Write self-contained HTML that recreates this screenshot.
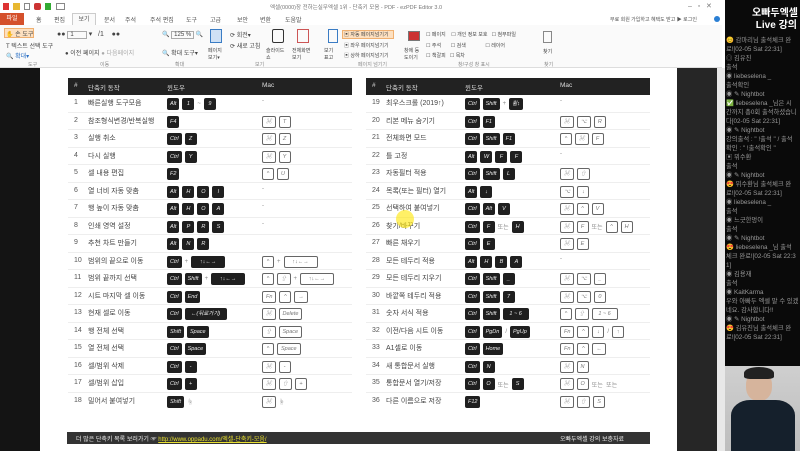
<!DOCTYPE html>
<html><head><meta charset="utf-8">
<style>
*{margin:0;padding:0;box-sizing:border-box}
body{width:800px;height:451px;overflow:hidden;position:relative;background:#fff;font-family:"Liberation Sans","Noto Sans CJK KR",sans-serif;font-size:7px;color:#333}
.a{position:absolute;white-space:nowrap}
.tab{position:absolute;top:15px;font-size:6px;color:#555}
.rb{position:absolute;top:25px;height:43px;background:#fafafa;border-bottom:1px solid #ddd}
.gl{position:absolute;top:61px;font-size:5px;color:#888}
.it{position:absolute;font-size:6px;color:#444;white-space:nowrap}
.tbl{position:absolute;top:78px;width:284px}
.hd{position:absolute;left:0;top:0;width:284px;height:17px;background:#222;color:#ddd;font-size:6.5px}
.hd span{position:absolute;top:4px}
.r{position:absolute;left:0;width:284px;height:17.5px;border-bottom:1px solid #eee}
.r .n{position:absolute;left:6px;top:4px;color:#555;font-size:7px}
.r .t{position:absolute;left:20px;top:3px;color:#444;font-size:7px}
.r .w{position:absolute;left:99px;top:3px;display:flex;gap:3px;align-items:center}
.r .m{position:absolute;left:194px;top:3px;display:flex;gap:3px;align-items:center}
.k{display:inline-block;height:12px;min-width:12px;padding:0 3px;background:#1f1f1f;color:#eee;font-size:5.5px;line-height:12px;border-radius:2px;text-align:center}
.c{display:inline-block;height:12px;min-width:12px;padding:0 3px;background:#fff;border:1px solid #666;color:#777;font-size:5.5px;line-height:10px;border-radius:2px;text-align:center}
.s{color:#888;font-size:6px}
.chat{position:absolute;left:726px;font-size:6.3px;color:#ddd;line-height:9px;white-space:nowrap}
</style></head><body>
<div class="a" style="left:0;top:0;width:800px;height:13px;background:#fff"></div>
<div class="a" style="left:3px;top:3px;width:6px;height:7px;background:#d33"></div>
<div class="a" style="left:13px;top:3px;width:7px;height:7px;background:#e8b830"></div>
<div class="a" style="left:24px;top:3px;width:6px;height:7px;border:1px solid #888"></div>
<div class="a" style="left:34px;top:3px;width:7px;height:7px;background:#c33;border-radius:2px"></div>
<div class="a" style="left:45px;top:3px;width:6px;height:7px;background:#3a3"></div>
<div class="a" style="left:56px;top:3px;width:9px;height:7px;border:1px solid #888"></div>
<div class="a" style="left:270px;top:3px;font-size:5.5px;color:#777">엑셀(0000)장 전하는실무엑셀 1위 - 단축키 모음 - PDF - ezPDF Editor 3.0</div>
<div class="a" style="left:688px;top:2px;font-size:7px;color:#777">–&nbsp;&nbsp;&nbsp;▫&nbsp;&nbsp;&nbsp;✕</div>
<div class="a" style="left:0;top:13px;width:24px;height:12px;background:#d4502b;color:#fff;font-size:6px;text-align:center;line-height:12px">파일</div>
<div class="tab" style="left:36px">홈</div><div class="tab" style="left:54px">편집</div>
<div class="a" style="left:72px;top:13px;width:24px;height:13px;border:1px solid #ccc;border-bottom:none;background:#fafafa;font-size:6px;color:#555;text-align:center;line-height:12px">보기</div>
<div class="tab" style="left:104px">문서</div><div class="tab" style="left:125px">주석</div><div class="tab" style="left:150px">주석 편집</div><div class="tab" style="left:186px">도구</div><div class="tab" style="left:210px">고급</div><div class="tab" style="left:237px">보안</div><div class="tab" style="left:260px">변환</div><div class="tab" style="left:285px">도움말</div>
<div class="a" style="left:610px;top:16px;font-size:5px;color:#555">무료 회원 가입하고 혜택도 받고 ▶ 로그인</div>
<div class="a" style="left:714px;top:16px;width:6px;height:6px;border-radius:50%;background:#2a7fd4"></div>
<div class="rb" style="left:0;width:722px"></div>
<div class="a" style="left:4px;top:28px;width:30px;height:10px;background:#fde0c0;border:1px solid #f0b070"></div>
<div class="it" style="left:6px;top:29px">✋ 손 도구</div>
<div class="it" style="left:6px;top:41px">T 텍스트 선택 도구</div>
<div class="it" style="left:6px;top:51px;color:#2a6fc4">🔍 확대▾</div>
<div class="gl" style="left:28px">도구</div>
<div class="a" style="left:57px;top:30px;width:100px;height:30px;font-size:7px;color:#444">●● <span style="border:1px solid #aaa;padding:0 12px 0 2px;font-size:6px">1</span> ▾&nbsp;&nbsp; /1&nbsp;&nbsp;&nbsp; ●●</div>
<div class="it" style="left:65px;top:48px">● 이전 페이지 <span style="color:#aaa">● 다음페이지</span></div>
<div class="gl" style="left:100px">이동</div>
<div class="it" style="left:162px;top:31px">🔍 <span style="border:1px solid #aaa;padding:0 2px">125 %</span> 🔍</div>
<div class="it" style="left:162px;top:48px">🔍 확대 도구▾</div>
<div class="gl" style="left:175px">확대</div>
<div class="a" style="left:210px;top:29px;width:12px;height:14px;border:1px solid #3a7cc4;background:#cfe1f5"></div>
<div class="it" style="left:208px;top:47px;font-size:5px">페이지<br>보기▾</div>
<div class="it" style="left:230px;top:30px">⟳ 회전▾</div>
<div class="it" style="left:230px;top:41px">⟳ 새로 고침</div>
<div class="a" style="left:272px;top:29px;width:12px;height:14px;border:1px solid #333;border-radius:2px"></div>
<div class="it" style="left:266px;top:47px;font-size:5px">슬라이드<br>쇼</div>
<div class="a" style="left:297px;top:29px;width:12px;height:14px;border:1px solid #c55"></div>
<div class="it" style="left:292px;top:47px;font-size:5px">전체화면<br>보기</div>
<div class="a" style="left:328px;top:29px;width:10px;height:14px;border:1px solid #3a7cc4"></div>
<div class="it" style="left:324px;top:47px;font-size:5px">보기<br>표고</div>
<div class="gl" style="left:255px">보기</div>
<div class="a" style="left:342px;top:30px;width:52px;height:9px;background:#fde0c0;border:1px solid #f0b070"></div>
<div class="it" style="left:344px;top:31px;font-size:5px">▣ 자동 페이지넘기기</div>
<div class="it" style="left:344px;top:42px;font-size:5px">▣ 좌우 페이지넘기기</div>
<div class="it" style="left:344px;top:52px;font-size:5px">▣ 상하 페이지넘기기</div>
<div class="gl" style="left:358px">페이지 넘기기</div>
<div class="a" style="left:408px;top:31px;width:12px;height:10px;background:#c33;border:1px solid #777"></div>
<div class="it" style="left:404px;top:47px;font-size:5px">창에 등<br>도이기</div>
<div class="it" style="left:426px;top:31px;font-size:5px">☐ 페이지&nbsp;&nbsp;&nbsp; ☐ 개인 정보 보호&nbsp;&nbsp; ☐ 첨부파일</div>
<div class="it" style="left:426px;top:42px;font-size:5px">☐ 주석&nbsp;&nbsp;&nbsp;&nbsp;&nbsp;&nbsp; ☐ 검색&nbsp;&nbsp;&nbsp;&nbsp;&nbsp;&nbsp;&nbsp;&nbsp;&nbsp;&nbsp;&nbsp;&nbsp;&nbsp; ☐ 레이어</div>
<div class="it" style="left:426px;top:52px;font-size:5px">☐ 책갈피&nbsp;&nbsp; ☐ 목차</div>
<div class="gl" style="left:458px">창/구성 창 표시</div>
<div class="a" style="left:543px;top:31px;width:9px;height:12px;border:1px solid #888"></div>
<div class="it" style="left:543px;top:48px;font-size:5px">찾기</div>
<div class="gl" style="left:544px">찾기</div>
<div class="a" style="left:0;top:68px;width:40px;height:383px;background:#141414"></div>
<div class="a" style="left:677px;top:68px;width:40px;height:383px;background:#262626"></div>
<div class="a" style="left:717px;top:68px;width:8px;height:383px;background:#e8e8e8"></div>
<div class="tbl" style="left:68px">
<div class="hd"><span style="left:6px">#</span><span style="left:20px">단축키 동작</span><span style="left:99px">윈도우</span><span style="left:194px">Mac</span></div>
<div class="r" style="top:17px"><span class="n">1</span><span class="t">빠른실행 도구모음</span><span class="w"><i class="k">Alt</i><i class="k">1</i><span class="s">~</span><i class="k">9</i></span><span class="m"><span class="s">-</span></span></div>
<div class="r" style="top:34.5px"><span class="n">2</span><span class="t">참조형식변경/반복실행</span><span class="w"><i class="k">F4</i></span><span class="m"><i class="c">⌘</i><i class="c">T</i></span></div>
<div class="r" style="top:52px"><span class="n">3</span><span class="t">실행 취소</span><span class="w"><i class="k">Ctrl</i><i class="k">Z</i></span><span class="m"><i class="c">⌘</i><i class="c">Z</i></span></div>
<div class="r" style="top:69.5px"><span class="n">4</span><span class="t">다시 실행</span><span class="w"><i class="k">Ctrl</i><i class="k">Y</i></span><span class="m"><i class="c">⌘</i><i class="c">Y</i></span></div>
<div class="r" style="top:87px"><span class="n">5</span><span class="t">셀 내용 편집</span><span class="w"><i class="k">F2</i></span><span class="m"><i class="c">^</i><i class="c">U</i></span></div>
<div class="r" style="top:104.5px"><span class="n">6</span><span class="t">열 너비 자동 맞춤</span><span class="w"><i class="k">Alt</i><i class="k">H</i><i class="k">O</i><i class="k">I</i></span><span class="m"><span class="s">-</span></span></div>
<div class="r" style="top:122px"><span class="n">7</span><span class="t">행 높이 자동 맞춤</span><span class="w"><i class="k">Alt</i><i class="k">H</i><i class="k">O</i><i class="k">A</i></span><span class="m"><span class="s">-</span></span></div>
<div class="r" style="top:139.5px"><span class="n">8</span><span class="t">인쇄 영역 설정</span><span class="w"><i class="k">Alt</i><i class="k">P</i><i class="k">R</i><i class="k">S</i></span><span class="m"><span class="s">-</span></span></div>
<div class="r" style="top:157px"><span class="n">9</span><span class="t">추천 차트 만들기</span><span class="w"><i class="k">Alt</i><i class="k">N</i><i class="k">R</i></span><span class="m"></span></div>
<div class="r" style="top:174.5px"><span class="n">10</span><span class="t">범위의 끝으로 이동</span><span class="w"><i class="k">Ctrl</i><span class="s">+</span><i class="k" style="width:34px">↑↓←→</i></span><span class="m"><i class="c">^</i><span class="s">+</span><i class="c" style="width:34px">↑↓←→</i></span></div>
<div class="r" style="top:192px"><span class="n">11</span><span class="t">범위 끝까지 선택</span><span class="w"><i class="k">Ctrl</i><i class="k">Shift</i><span class="s">+</span><i class="k" style="width:34px">↑↓←→</i></span><span class="m"><i class="c">^</i><i class="c">⇧</i><span class="s">+</span><i class="c" style="width:34px">↑↓←→</i></span></div>
<div class="r" style="top:209.5px"><span class="n">12</span><span class="t">시트 마지막 셀 이동</span><span class="w"><i class="k">Ctrl</i><i class="k">End</i></span><span class="m"><i class="c">Fn</i><i class="c">^</i><i class="c">→</i></span></div>
<div class="r" style="top:227px"><span class="n">13</span><span class="t">현재 셀로 이동</span><span class="w"><i class="k">Ctrl</i><i class="k" style="width:42px">←(뒤로가기)</i></span><span class="m"><i class="c">⌘</i><i class="c">Delete</i></span></div>
<div class="r" style="top:244.5px"><span class="n">14</span><span class="t">행 전체 선택</span><span class="w"><i class="k">Shift</i><i class="k">Space</i></span><span class="m"><i class="c">⇧</i><i class="c">Space</i></span></div>
<div class="r" style="top:262px"><span class="n">15</span><span class="t">열 전체 선택</span><span class="w"><i class="k">Ctrl</i><i class="k">Space</i></span><span class="m"><i class="c">^</i><i class="c">Space</i></span></div>
<div class="r" style="top:279.5px"><span class="n">16</span><span class="t">셀/범위 삭제</span><span class="w"><i class="k">Ctrl</i><i class="k">-</i></span><span class="m"><i class="c">⌘</i><i class="c">-</i></span></div>
<div class="r" style="top:297px"><span class="n">17</span><span class="t">셀/범위 삽입</span><span class="w"><i class="k">Ctrl</i><i class="k">+</i></span><span class="m"><i class="c">⌘</i><i class="c">⇧</i><i class="c">+</i></span></div>
<div class="r" style="top:314.5px;border:none"><span class="n">18</span><span class="t">밀어서 붙여넣기</span><span class="w"><i class="k">Shift</i><span class="s">☝</span></span><span class="m"><i class="c">⌘</i><span class="s">☝</span></span></div>
</div>
<div class="tbl" style="left:366px">
<div class="hd"><span style="left:6px">#</span><span style="left:20px">단축키 동작</span><span style="left:99px">윈도우</span><span style="left:194px">Mac</span></div>
<div class="r" style="top:17px"><span class="n">19</span><span class="t">최우스크롤 (2019↑)</span><span class="w"><i class="k">Ctrl</i><i class="k">Shift</i><span class="s">+</span><i class="k">휠↕</i></span><span class="m"><span class="s">-</span></span></div>
<div class="r" style="top:34.5px"><span class="n">20</span><span class="t">리본 메뉴 숨기기</span><span class="w"><i class="k">Ctrl</i><i class="k">F1</i></span><span class="m"><i class="c">⌘</i><i class="c">⌥</i><i class="c">R</i></span></div>
<div class="r" style="top:52px"><span class="n">21</span><span class="t">전체화면 모드</span><span class="w"><i class="k">Ctrl</i><i class="k">Shift</i><i class="k">F1</i></span><span class="m"><i class="c">^</i><i class="c">⌘</i><i class="c">F</i></span></div>
<div class="r" style="top:69.5px"><span class="n">22</span><span class="t">틀 고정</span><span class="w"><i class="k">Alt</i><i class="k">W</i><i class="k">F</i><i class="k">F</i></span><span class="m"><span class="s">-</span></span></div>
<div class="r" style="top:87px"><span class="n">23</span><span class="t">자동필터 적용</span><span class="w"><i class="k">Ctrl</i><i class="k">Shift</i><i class="k">L</i></span><span class="m"><i class="c">⌘</i><i class="c">⇧</i></span></div>
<div class="r" style="top:104.5px"><span class="n">24</span><span class="t">목록(또는 필터) 열기</span><span class="w"><i class="k">Alt</i><i class="k">↓</i></span><span class="m"><i class="c">⌥</i><i class="c">↓</i></span></div>
<div class="r" style="top:122px"><span class="n">25</span><span class="t">선택하여 붙여넣기</span><span class="w"><i class="k">Ctrl</i><i class="k">Alt</i><i class="k">V</i></span><span class="m"><i class="c">⌘</i><i class="c">^</i><i class="c">V</i></span></div>
<div class="r" style="top:139.5px"><span class="n">26</span><span class="t">찾기/바꾸기</span><span class="w"><i class="k">Ctrl</i><i class="k">F</i><span class="s">또는</span><i class="k">H</i></span><span class="m"><i class="c">⌘</i><i class="c">F</i><span class="s">또는</span><i class="c">^</i><i class="c">H</i></span></div>
<div class="r" style="top:157px"><span class="n">27</span><span class="t">빠른 채우기</span><span class="w"><i class="k">Ctrl</i><i class="k">E</i></span><span class="m"><i class="c">⌘</i><i class="c">E</i></span></div>
<div class="r" style="top:174.5px"><span class="n">28</span><span class="t">모든 테두리 적용</span><span class="w"><i class="k">Alt</i><i class="k">H</i><i class="k">B</i><i class="k">A</i></span><span class="m"><span class="s">-</span></span></div>
<div class="r" style="top:192px"><span class="n">29</span><span class="t">모든 테두리 지우기</span><span class="w"><i class="k">Ctrl</i><i class="k">Shift</i><i class="k">_</i></span><span class="m"><i class="c">⌘</i><i class="c">⌥</i><i class="c">_</i></span></div>
<div class="r" style="top:209.5px"><span class="n">30</span><span class="t">바깥쪽 테두리 적용</span><span class="w"><i class="k">Ctrl</i><i class="k">Shift</i><i class="k">7</i></span><span class="m"><i class="c">⌘</i><i class="c">⌥</i><i class="c">0</i></span></div>
<div class="r" style="top:227px"><span class="n">31</span><span class="t">숫자 서식 적용</span><span class="w"><i class="k">Ctrl</i><i class="k">Shift</i><i class="k" style="width:26px">1 ~ 6</i></span><span class="m"><i class="c">^</i><i class="c">⇧</i><i class="c" style="width:26px">1 ~ 6</i></span></div>
<div class="r" style="top:244.5px"><span class="n">32</span><span class="t">이전/다음 시트 이동</span><span class="w"><i class="k">Ctrl</i><i class="k">PgDn</i><span class="s">/</span><i class="k">PgUp</i></span><span class="m"><i class="c">Fn</i><i class="c">^</i><i class="c">↓</i><span class="s">/</span><i class="c">↑</i></span></div>
<div class="r" style="top:262px"><span class="n">33</span><span class="t">A1셀로 이동</span><span class="w"><i class="k">Ctrl</i><i class="k">Home</i></span><span class="m"><i class="c">Fn</i><i class="c">^</i><i class="c">←</i></span></div>
<div class="r" style="top:279.5px"><span class="n">34</span><span class="t">새 통합문서 실행</span><span class="w"><i class="k">Ctrl</i><i class="k">N</i></span><span class="m"><i class="c">⌘</i><i class="c">N</i></span></div>
<div class="r" style="top:297px"><span class="n">35</span><span class="t">통합문서 열기/저장</span><span class="w"><i class="k">Ctrl</i><i class="k">O</i><span class="s">또는</span><i class="k">S</i></span><span class="m"><i class="c">⌘</i><i class="c">O</i><span class="s">또는&nbsp; 또는</span></span></div>
<div class="r" style="top:314.5px;border:none"><span class="n">36</span><span class="t">다른 이름으로 저장</span><span class="w"><i class="k">F12</i></span><span class="m"><i class="c">⌘</i><i class="c">⇧</i><i class="c">S</i></span></div>
</div>
<div class="a" style="left:396px;top:210px;width:18px;height:18px;border-radius:50%;background:rgba(255,230,0,.6)"></div>
<div class="a" style="left:67px;top:432px;width:583px;height:12px;background:#333"></div>
<div class="a" style="left:76px;top:434px;font-size:6px;color:#eee">더 많은 단축키 목록 보러가기 ☞ <span style="color:#e8e030;text-decoration:underline">http://www.oppadu.com/엑셀-단축키-모음/</span></div>
<div class="a" style="left:560px;top:434px;font-size:6px;color:#eee">오빠두엑셀 강의 보충자료</div>
<div class="a" style="left:725px;top:0;width:75px;height:451px;background:#0a0a0a"></div>
<div class="a" style="left:752px;top:8px;font-size:10px;font-weight:bold;color:#fff;text-align:center;line-height:12px">오빠두엑셀<br>&nbsp;Live 강의</div>
<div class="chat" style="top:36px;color:#999">😊 감마리님 출석체크 완<br>료![02-05 Sat 22:31]<br>◎ 김유진<br>출석<br>◉ liebeselena _<br>출석확인<br>◉ ✎ Nightbot<br><span style="color:#6c6">✅</span> liebeselena _님은 시<br>간까지 총0회 출석하셨습니<br>다[02-05 Sat 22:31]<br>◉ ✎ Nightbot<br>강의출석 : " !출석 " / 출석<br>확인 : " !출석확인 "<br>▣ 뮈수환<br>출석<br>◉ ✎ Nightbot<br>😍 뮈수환님 출석체크 완<br>료![02-05 Sat 22:31]<br>◉ liebeselena _<br>출석<br>◉ 느긋한멍이<br>출석<br>◉ ✎ Nightbot<br>😍 liebeselena _님 출석<br>체크 완료![02-05 Sat 22:3<br>1]<br>◉ 김용재<br>출석<br>◉ KaitKarma<br>우와 아빠두 엑셀 말 수 있겠<br>네요. 감사합니다!!<br>◉ ✎ Nightbot<br>😍 김유진님 출석체크 완<br>료![02-05 Sat 22:31]</div>
<div class="a" style="left:725px;top:366px;width:75px;height:85px;background:linear-gradient(#cfcfcf,#bdbdbd)"></div>
<div class="a" style="left:746px;top:371px;width:26px;height:30px;border-radius:45%;background:#d6b49c"></div>
<div class="a" style="left:744px;top:367px;width:30px;height:12px;border-radius:50% 50% 20% 20%;background:#222"></div>
<div class="a" style="left:731px;top:400px;width:64px;height:51px;border-radius:30% 30% 0 0;background:#15202c"></div>
</body></html>
